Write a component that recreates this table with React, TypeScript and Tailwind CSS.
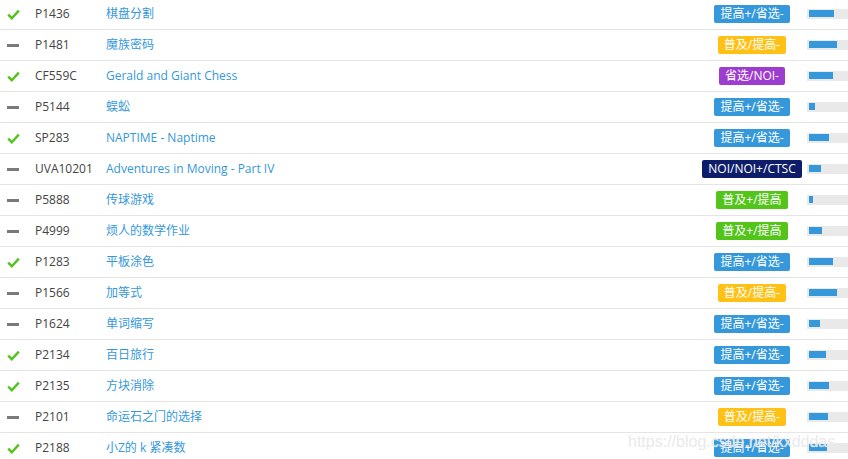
const LEVELS = {
  tg: { label: "提高+/省选-", cls: "bg-[#3498db]" },
  pj: { label: "普及/提高-", cls: "bg-[#ffc116]" },
  sx: { label: "省选/NOI-", cls: "bg-[#9d3dcf]" },
  noi: { label: "NOI/NOI+/CTSC", cls: "bg-[#0e1d69]" },
  pjp: { label: "普及+/提高", cls: "bg-[#52c41a]" },
};

type Level = keyof typeof LEVELS;

const problems: { done: boolean; pid: string; title: string; level: Level; rate: number }[] = [
  { done: true, pid: "P1436", title: "棋盘分割", level: "tg", rate: 25 },
  { done: false, pid: "P1481", title: "魔族密码", level: "pj", rate: 28 },
  { done: true, pid: "CF559C", title: "Gerald and Giant Chess", level: "sx", rate: 24 },
  { done: false, pid: "P5144", title: "蜈蚣", level: "tg", rate: 6 },
  { done: true, pid: "SP283", title: "NAPTIME - Naptime", level: "tg", rate: 20 },
  { done: false, pid: "UVA10201", title: "Adventures in Moving - Part IV", level: "noi", rate: 12 },
  { done: false, pid: "P5888", title: "传球游戏", level: "pjp", rate: 4 },
  { done: false, pid: "P4999", title: "烦人的数学作业", level: "pjp", rate: 13 },
  { done: true, pid: "P1283", title: "平板涂色", level: "tg", rate: 24 },
  { done: false, pid: "P1566", title: "加等式", level: "pj", rate: 28 },
  { done: false, pid: "P1624", title: "单词缩写", level: "tg", rate: 11 },
  { done: true, pid: "P2134", title: "百日旅行", level: "tg", rate: 17 },
  { done: true, pid: "P2135", title: "方块消除", level: "tg", rate: 20 },
  { done: false, pid: "P2101", title: "命运石之门的选择", level: "pj", rate: 19 },
  { done: true, pid: "P2188", title: "小Z的 k 紧凑数", level: "tg", rate: 18 },
];

function Status({ done }: { done: boolean }) {
  if (done) {
    return (
      <svg width="13" height="11" viewBox="0 0 13 11" className="block">
        <path d="M1.2 5.6 L4.8 9.2 L11.8 1.6" fill="none" stroke="#52c41a" strokeWidth="2.4" />
      </svg>
    );
  }
  return <span className="block h-[3px] w-[12px] bg-[#7a7a7a]" />;
}

export default function App() {
  return (
    <div className="relative h-[459px] w-[848px] overflow-hidden bg-white font-['Open_Sans','Noto_Sans_CJK_SC',sans-serif] text-[12px]">
      <div className="-mt-px">
        {problems.map((p) => (
          <div key={p.pid} className="flex h-[31px] items-center border-b border-[#e5e5e5]">
            <div className="flex w-[35px] shrink-0 items-center pl-[7px]">
              <Status done={p.done} />
            </div>
            <div className="w-[71px] shrink-0 text-[#444]">{p.pid}</div>
            <div className="min-w-0 flex-1 truncate text-[#3498db]">{p.title}</div>
            <div className="flex w-[110px] shrink-0 justify-center">
              <span
                className={`${LEVELS[p.level].cls} whitespace-nowrap rounded-[2px] px-[6px] text-[12px] leading-[18px] text-white`}
              >
                {LEVELS[p.level].label}
              </span>
            </div>
            <div className="flex h-[10px] w-[41px] shrink-0 bg-[#e9e9e9] pb-[2px] pl-[2px] pt-[1px]">
              <div className="h-full bg-[#3498db]" style={{ width: p.rate }} />
            </div>
          </div>
        ))}
      </div>
      <div className="pointer-events-none absolute left-[628px] top-[430px] font-['Liberation_Sans',sans-serif] text-[16px] text-[#e4e4e4]/80 [text-shadow:0_0_1px_rgba(255,255,255,0.9)]">
        https://blog.csdn.net/kxdddas
      </div>
    </div>
  );
}
